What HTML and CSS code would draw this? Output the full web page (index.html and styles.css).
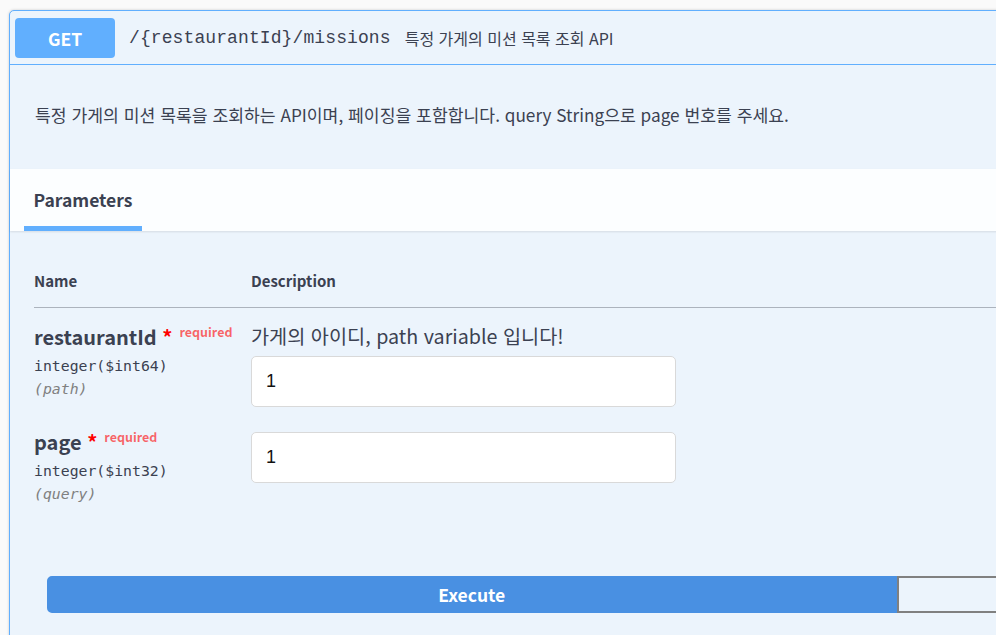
FILE: index.html
```html
<!DOCTYPE html>
<html lang="ko">
<head>
<meta charset="utf-8">
<title>Swagger - missions</title>
<link rel="stylesheet" href="styles.css">
</head>
<body>
<div class="opblock">
  <div class="summary">
    <span class="method">GET</span>
    <span class="path">/{restaurantId}/missions</span>
    <span class="summary-desc">특정 가게의 미션 목록 조회 API</span>
  </div>
  <div class="op-body">
    <div class="desc-wrap">
      <p>특정 가게의 미션 목록을 조회하는 API이며, 페이징을 포함합니다. query String으로 page 번호를 주세요.</p>
    </div>
    <div class="section-header">
      <div class="tab">Parameters</div>
    </div>
    <div class="table-container">
      <table class="params">
        <thead>
          <tr><th class="col-name">Name</th><th class="col-desc">Description</th></tr>
        </thead>
        <tbody>
          <tr>
            <td class="col-name">
              <div class="pname">restaurantId<span class="star">&nbsp;*</span><span class="req">required</span></div>
              <div class="ptype">integer($int64)</div>
              <div class="pin">(path)</div>
            </td>
            <td class="col-desc">
              <p class="pdesc">가게의 아이디, path variable 입니다!</p>
              <input class="pinput" type="text" value="1">
            </td>
          </tr>
          <tr>
            <td class="col-name">
              <div class="pname">page<span class="star">&nbsp;*</span><span class="req">required</span></div>
              <div class="ptype">integer($int32)</div>
              <div class="pin">(query)</div>
            </td>
            <td class="col-desc">
              <input class="pinput" type="text" value="1">
            </td>
          </tr>
        </tbody>
      </table>
    </div>
    <div class="btn-group">
      <button class="btn execute">Execute</button>
      <button class="btn clear">Clear</button>
    </div>
  </div>
</div>
</body>
</html>
```

FILE: styles.css
```css
html, body {
  margin: 0;
  padding: 0;
  overflow: hidden;
  background: #fafafa;
}
body {
  font-family: "Noto Sans CJK KR", "Noto Sans", sans-serif;
  color: #3b4151;
  width: 996px;
  height: 635px;
}
.opblock {
  margin: 10px 0 0 9px;
  width: 1775px;
  box-sizing: border-box;
  border: 1px solid #61affe;
  border-radius: 5px;
  background: #ecf4fc;
  box-shadow: 0 0 3px rgba(0, 0, 0, .19);
}
.summary {
  display: flex;
  align-items: center;
  padding: 7px 5px 6px;
  border-bottom: 1px solid #61affe;
}
.method {
  width: 100px;
  height: 40px;
  border-radius: 4px;
  background: #61affe;
  color: #fff;
  font-weight: 700;
  font-size: 17.5px;
  display: flex;
  align-items: center;
  justify-content: center;
}
.path {
  margin-left: 14px;
  font-family: "Liberation Mono", monospace;
  font-size: 18px;
  letter-spacing: .1px;
  color: #3b4151;
}
.summary-desc {
  margin-left: 14px;
  font-size: 16px;
}
.desc-wrap {
  padding: 19px 25px;
  margin-bottom: 6px;
}
.desc-wrap p {
  margin: 17.5px 0;
  font-size: 17.2px;
  line-height: 25px;
}
.section-header {
  height: 62px;
  box-sizing: border-box;
  padding-left: 14px;
  background: rgba(255, 255, 255, .85);
  box-shadow: 0 1px 2px rgba(0, 0, 0, .1);
  display: flex;
}
.tab {
  box-sizing: border-box;
  height: 62px;
  width: 118px;
  padding-top: 20px;
  border-bottom: 5px solid #61affe;
  text-align: center;
  font-weight: 700;
  font-size: 17.5px;
  line-height: 22px;
}
.table-container {
  padding: 25px 0 36px 24px;
}
.params {
  width: 100%;
  border-collapse: collapse;
}
.params th {
  text-align: left;
  padding: 14px 0 15px;
  font-size: 15px;
  font-weight: 700;
  line-height: 22px;
  border-bottom: 1px solid rgba(59, 65, 81, .2);
}
.params td {
  vertical-align: top;
  padding: 12.5px 0 0;
}
.params tbody tr:first-child td {
  padding-bottom: 1px;
}
.col-name {
  width: 217px;
}
.pname {
  font-size: 20px;
  font-weight: 700;
  line-height: 31px;
  white-space: nowrap;
}
.star {
  color: #f00;
}
.req {
  color: rgba(255, 0, 0, .6);
  font-size: 12.5px;
  line-height: 0;
  padding-left: 7px;
  vertical-align: 8px;
}
.ptype {
  font-family: "DejaVu Sans Mono", monospace;
  font-size: 14.8px;
  line-height: 17px;
  padding: 5px 0;
}
.pin {
  font-family: "DejaVu Sans Mono", monospace;
  font-size: 14.8px;
  font-style: italic;
  color: #808080;
  line-height: 19px;
}
.pdesc {
  margin: 0;
  font-size: 19.7px;
  line-height: 29px;
}
.pinput {
  display: block;
  width: 425px;
  height: 51px;
  margin: 6px 0;
  box-sizing: border-box;
  border: 1px solid #d9d9d9;
  border-radius: 5px;
  background: #fff;
  padding: 0 14px;
  font-family: "Liberation Sans", sans-serif;
  font-size: 18px;
  color: #111;
}
.btn-group {
  display: flex;
  padding: 37px 37px 60px;
}
.btn {
  flex: 1;
  height: 37px;
  box-sizing: border-box;
  font-family: "Noto Sans CJK KR", "Noto Sans", sans-serif;
  font-size: 17.5px;
  font-weight: 700;
  padding: 0;
}
.execute {
  background: #4990e2;
  border: 2px solid #4990e2;
  color: #fff;
  border-radius: 5px 0 0 5px;
}
.clear {
  background: transparent;
  border: 2px solid #808080;
  color: #3b4151;
  border-radius: 0 5px 5px 0;
}
```
